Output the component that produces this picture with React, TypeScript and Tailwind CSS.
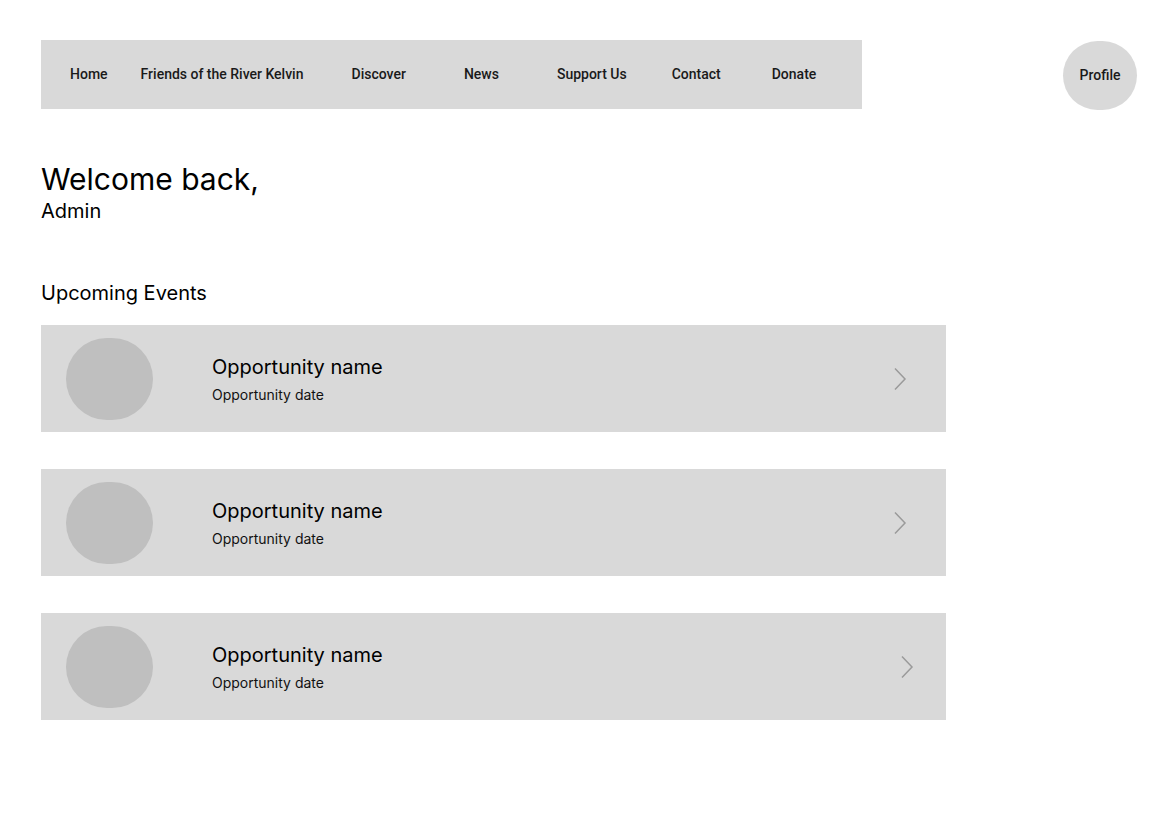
import React from 'react';

const navItems = [
  { label: 'Home', ml: 'ml-[29px]' },
  { label: 'Friends of the River Kelvin', ml: 'ml-[33px]' },
  { label: 'Discover', ml: 'ml-[48px]' },
  { label: 'News', ml: 'ml-[58px]' },
  { label: 'Support Us', ml: 'ml-[58px]' },
  { label: 'Contact', ml: 'ml-[45px]' },
  { label: 'Donate', ml: 'ml-[51px]' },
];

const events = [
  { name: 'Opportunity name', date: 'Opportunity date', chevron: 'mr-[39px]' },
  { name: 'Opportunity name', date: 'Opportunity date', chevron: 'mr-[39px]' },
  { name: 'Opportunity name', date: 'Opportunity date', chevron: 'mr-[32px]' },
];

const Chevron: React.FC = () => (
  <svg width="14" height="24" viewBox="0 0 14 24" fill="none">
    <path d="M2 1.5 L12 12 L2 22.5" stroke="#9a9a9a" strokeWidth="1.5" />
  </svg>
);

const App: React.FC = () => {
  return (
    <div className="min-h-[830px] bg-white text-black" style={{ fontFamily: 'Inter, "Noto Sans", sans-serif' }}>
      {/* Top bar */}
      <div className="flex items-start pl-[41px] pr-[27px] pt-[40px]">
        <nav
          className="flex h-[69px] w-[821px] items-center bg-[#d9d9d9] text-[14px] font-medium text-[#1a1a1a]"
          style={{ fontFamily: 'Roboto, "Liberation Sans", sans-serif' }}
        >
          {navItems.map((item) => (
            <span key={item.label} className={item.ml}>
              {item.label}
            </span>
          ))}
        </nav>
        <div
          className="ml-auto mt-px flex h-[69px] w-[74px] items-center justify-center rounded-full bg-[#d9d9d9] text-[14px] font-medium text-[#1a1a1a]"
          style={{ fontFamily: 'Roboto, "Liberation Sans", sans-serif' }}
        >
          Profile
        </div>
      </div>

      {/* Welcome */}
      <div className="mt-[51px] px-[41px]">
        <h1 className="text-[30px] leading-[36px] font-normal">Welcome back,</h1>
        <p className="mt-[2px] text-[20px] leading-[24px]">Admin</p>
      </div>

      {/* Upcoming events */}
      <div className="mt-[58px] px-[41px]">
        <h2 className="text-[20px] leading-[24px] font-normal">Upcoming Events</h2>
        <div className="mt-[20px] flex w-[905px] flex-col gap-[37px]">
          {events.map((ev, i) => (
            <div key={i} className="flex h-[107px] items-center bg-[#d9d9d9]">
              <div className="ml-[25px] h-[82px] w-[87px] rounded-full bg-[#bfbfbf]" />
              <div className="ml-[59px] flex flex-col pt-[2px]">
                <span className="text-[20px] leading-[24px]">{ev.name}</span>
                <span className="mt-[7px] text-[14px] leading-[18px] text-[#111]">{ev.date}</span>
              </div>
              <div className={`ml-auto ${ev.chevron}`}>
                <Chevron />
              </div>
            </div>
          ))}
        </div>
      </div>
    </div>
  );
};

export default App;
